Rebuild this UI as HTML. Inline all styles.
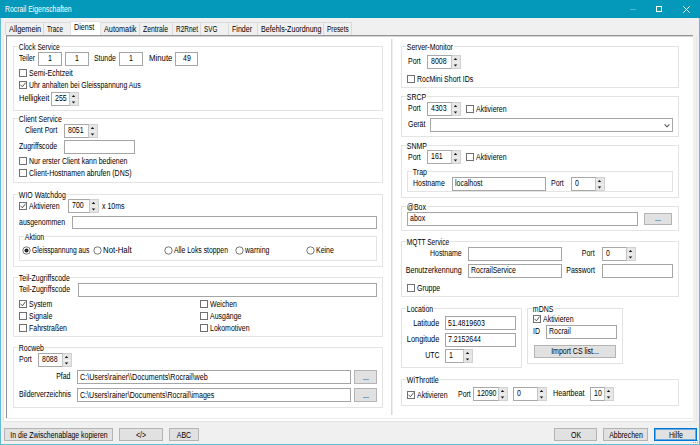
<!DOCTYPE html><html><head><meta charset="utf-8"><style>
html,body{margin:0;padding:0;}
body{width:700px;height:445px;position:relative;overflow:hidden;background:#f0f0f0;font-family:"Liberation Sans",sans-serif;font-size:8.5px;color:#000;}
.t{position:absolute;white-space:nowrap;line-height:9px;transform:scaleX(0.82);}
.gl{background:#fff;padding:0 1px;}
</style></head><body>
<div style="position:absolute;left:0px;top:0px;width:700px;height:18px;background:#0499bb;"></div>
<div style="position:absolute;left:0px;top:18px;width:1px;height:427px;background:#62bcd4;"></div>
<div style="position:absolute;left:699px;top:18px;width:1px;height:427px;background:#62bcd4;"></div>
<div style="position:absolute;left:0px;top:444px;width:700px;height:1px;background:#62bcd4;"></div>
<div class="t" style="top:5px;left:5px;transform-origin:0 0;color:#fff;transform:scaleX(0.806);">Rocrail Eigenschaften</div>
<div style="position:absolute;left:630px;top:9px;width:6px;height:1px;background:#4db8d2;"></div>
<div style="position:absolute;left:656px;top:6px;width:6px;height:6px;border:1px solid #fff;box-sizing:border-box;"></div>
<svg style="position:absolute;left:683px;top:6px" width="7" height="7"><path d="M0.3 0.3L6.7 6.7M6.7 0.3L0.3 6.7" stroke="#fff" stroke-width="1"/></svg>
<div style="position:absolute;left:3px;top:35px;width:1px;height:387px;background:#e6e6e6;"></div>
<div style="position:absolute;left:696px;top:35px;width:1px;height:387px;background:#e8e8e8;"></div>
<div style="position:absolute;left:4px;top:35px;width:689px;height:386px;background:#fff;"></div>
<div style="position:absolute;left:3px;top:421px;width:694px;height:1px;background:#e3e3e3;"></div>
<div style="position:absolute;left:6px;top:35px;width:687px;height:1px;background:#959595;"></div>
<div style="position:absolute;left:7px;top:36px;width:686px;height:1px;background:#d4d4d4;"></div>
<div style="position:absolute;left:6px;top:35px;width:1px;height:383px;background:#8c8c8c;"></div>
<div style="position:absolute;left:6px;top:418px;width:687px;height:1px;background:#ececec;"></div>
<div style="position:absolute;left:5px;top:22px;width:39px;height:13px;border:1px solid #dadada;border-bottom:none;background:#f0f0f0;box-sizing:border-box;"></div>
<div class="t" style="top:25px;left:9px;transform-origin:0 0;transform:scaleX(0.862);">Allgemein</div>
<div style="position:absolute;left:43px;top:22px;width:29px;height:13px;border:1px solid #dadada;border-bottom:none;background:#f0f0f0;box-sizing:border-box;"></div>
<div class="t" style="top:25px;left:47px;transform-origin:0 0;transform:scaleX(0.743);">Trace</div>
<div style="position:absolute;left:100px;top:22px;width:40px;height:13px;border:1px solid #dadada;border-bottom:none;background:#f0f0f0;box-sizing:border-box;"></div>
<div class="t" style="top:25px;left:104px;transform-origin:0 0;transform:scaleX(0.858);">Automatik</div>
<div style="position:absolute;left:139px;top:22px;width:34px;height:13px;border:1px solid #dadada;border-bottom:none;background:#f0f0f0;box-sizing:border-box;"></div>
<div class="t" style="top:25px;left:143px;transform-origin:0 0;transform:scaleX(0.806);">Zentrale</div>
<div style="position:absolute;left:172px;top:22px;width:29px;height:13px;border:1px solid #dadada;border-bottom:none;background:#f0f0f0;box-sizing:border-box;"></div>
<div class="t" style="top:25px;left:176px;transform-origin:0 0;transform:scaleX(0.764);">R2Rnet</div>
<div style="position:absolute;left:200px;top:22px;width:29px;height:13px;border:1px solid #dadada;border-bottom:none;background:#f0f0f0;box-sizing:border-box;"></div>
<div class="t" style="top:25px;left:204px;transform-origin:0 0;transform:scaleX(0.740);">SVG</div>
<div style="position:absolute;left:228px;top:22px;width:30px;height:13px;border:1px solid #dadada;border-bottom:none;background:#f0f0f0;box-sizing:border-box;"></div>
<div class="t" style="top:25px;left:232px;transform-origin:0 0;transform:scaleX(0.835);">Finder</div>
<div style="position:absolute;left:257px;top:22px;width:67px;height:13px;border:1px solid #dadada;border-bottom:none;background:#f0f0f0;box-sizing:border-box;"></div>
<div class="t" style="top:25px;left:261px;transform-origin:0 0;transform:scaleX(0.837);">Befehls-Zuordnung</div>
<div style="position:absolute;left:323px;top:22px;width:29px;height:13px;border:1px solid #dadada;border-bottom:none;background:#f0f0f0;box-sizing:border-box;"></div>
<div class="t" style="top:25px;left:327px;transform-origin:0 0;transform:scaleX(0.750);">Presets</div>
<div style="position:absolute;left:70px;top:21px;width:31px;height:14px;border:1px solid #e3e3e3;border-bottom:none;background:#fff;box-sizing:border-box;"></div>
<div class="t" style="top:23px;left:74px;transform-origin:0 0;transform:scaleX(0.839);">Dienst</div>
<div style="position:absolute;left:391px;top:39px;width:1px;height:376px;background:#d9d9d9;"></div>
<div style="position:absolute;left:392px;top:39px;width:1px;height:376px;background:#ededed;"></div>
<div style="position:absolute;left:13px;top:46px;width:370px;height:65px;border:1px solid #e3e3e3;box-sizing:border-box;"></div>
<div class="t gl" style="left:17.5px;top:43px;transform-origin:0 0;transform:scaleX(0.788);">Clock Service</div>
<div class="t" style="top:54px;left:19px;transform-origin:0 0;transform:scaleX(0.785);">Teiler</div>
<div style="position:absolute;left:38px;top:52px;width:24px;height:14px;border:1px solid #a5a5a5;background:#fff;box-sizing:border-box;"></div>
<div class="t" style="top:54px;left:-50.0px;width:200px;text-align:center;transform-origin:50% 0;">1</div>
<div style="position:absolute;left:65px;top:52px;width:24px;height:14px;border:1px solid #a5a5a5;background:#fff;box-sizing:border-box;"></div>
<div class="t" style="top:54px;left:-23.0px;width:200px;text-align:center;transform-origin:50% 0;">1</div>
<div class="t" style="top:54px;left:94px;transform-origin:0 0;transform:scaleX(0.808);">Stunde</div>
<div style="position:absolute;left:119px;top:52px;width:24px;height:14px;border:1px solid #a5a5a5;background:#fff;box-sizing:border-box;"></div>
<div class="t" style="top:54px;left:31.0px;width:200px;text-align:center;transform-origin:50% 0;">1</div>
<div class="t" style="top:54px;left:149px;transform-origin:0 0;transform:scaleX(0.920);">Minute</div>
<div style="position:absolute;left:175px;top:52px;width:23px;height:14px;border:1px solid #a5a5a5;background:#fff;box-sizing:border-box;"></div>
<div class="t" style="top:54px;left:86.5px;width:200px;text-align:center;transform-origin:50% 0;">49</div>
<div style="position:absolute;left:19px;top:69px;width:8px;height:8px;border:1px solid #707070;background:#fff;box-sizing:border-box;"></div>
<div class="t" style="top:69px;left:28.5px;transform-origin:0 0;transform:scaleX(0.835);">Semi-Echtzeit</div>
<div style="position:absolute;left:19px;top:81px;width:8px;height:8px;border:1px solid #707070;background:#fff;box-sizing:border-box;"></div>
<svg style="position:absolute;left:19px;top:81px" width="8" height="8"><path d="M1.4 3.7L3.4 5.8L6.6 1.6" stroke="#444" stroke-width="0.9" fill="none"/></svg>
<div class="t" style="top:81px;left:28.5px;transform-origin:0 0;transform:scaleX(0.809);">Uhr anhalten bei Gleisspannung Aus</div>
<div class="t" style="top:94px;left:19px;transform-origin:0 0;transform:scaleX(0.876);">Helligkeit</div>
<div style="position:absolute;left:51px;top:92px;width:19px;height:14px;border:1px solid #a8a8a8;border-right-color:#c4c4c4;background:#fff;box-sizing:border-box;"></div>
<div style="position:absolute;left:70px;top:92px;width:9px;height:14px;border:1px solid #d0d0d0;border-left:none;background:#e6e6e6;box-sizing:border-box;"></div>
<div style="position:absolute;left:70px;top:99px;width:8px;height:1px;background:#f0f0f0;"></div>
<svg style="position:absolute;left:71px;top:94px" width="5" height="4"><path d="M0.8 3L2.5 1.1L4.2 3Z" fill="#111"/></svg>
<svg style="position:absolute;left:71px;top:101px" width="5" height="4"><path d="M0.8 0.5L2.5 2.4L4.2 0.5Z" fill="#111"/></svg>
<div class="t" style="top:94px;left:55px;transform-origin:0 0;">255</div>
<div style="position:absolute;left:13px;top:118px;width:370px;height:65px;border:1px solid #e3e3e3;box-sizing:border-box;"></div>
<div class="t gl" style="left:17.5px;top:115px;transform-origin:0 0;">Client Service</div>
<div class="t" style="top:126px;left:25px;transform-origin:0 0;transform:scaleX(0.815);">Client Port</div>
<div style="position:absolute;left:64px;top:124px;width:25px;height:14px;border:1px solid #a8a8a8;border-right-color:#c4c4c4;background:#fff;box-sizing:border-box;"></div>
<div style="position:absolute;left:89px;top:124px;width:9px;height:14px;border:1px solid #d0d0d0;border-left:none;background:#e6e6e6;box-sizing:border-box;"></div>
<div style="position:absolute;left:89px;top:131px;width:8px;height:1px;background:#f0f0f0;"></div>
<svg style="position:absolute;left:90px;top:126px" width="5" height="4"><path d="M0.8 3L2.5 1.1L4.2 3Z" fill="#111"/></svg>
<svg style="position:absolute;left:90px;top:133px" width="5" height="4"><path d="M0.8 0.5L2.5 2.4L4.2 0.5Z" fill="#111"/></svg>
<div class="t" style="top:126px;left:68px;transform-origin:0 0;">8051</div>
<div class="t" style="top:142px;left:19px;transform-origin:0 0;">Zugriffscode</div>
<div style="position:absolute;left:64px;top:140px;width:71px;height:14px;border:1px solid #a5a5a5;background:#fff;box-sizing:border-box;"></div>
<div style="position:absolute;left:19px;top:157px;width:8px;height:8px;border:1px solid #707070;background:#fff;box-sizing:border-box;"></div>
<div class="t" style="top:157px;left:28.5px;transform-origin:0 0;">Nur erster Client kann bedienen</div>
<div style="position:absolute;left:19px;top:169px;width:8px;height:8px;border:1px solid #707070;background:#fff;box-sizing:border-box;"></div>
<div class="t" style="top:169px;left:28.5px;transform-origin:0 0;">Client-Hostnamen abrufen (DNS)</div>
<div style="position:absolute;left:13px;top:194px;width:370px;height:73px;border:1px solid #e3e3e3;box-sizing:border-box;"></div>
<div class="t gl" style="left:17.5px;top:191px;transform-origin:0 0;">WIO Watchdog</div>
<div style="position:absolute;left:19px;top:202px;width:8px;height:8px;border:1px solid #707070;background:#fff;box-sizing:border-box;"></div>
<svg style="position:absolute;left:19px;top:202px" width="8" height="8"><path d="M1.4 3.7L3.4 5.8L6.6 1.6" stroke="#444" stroke-width="0.9" fill="none"/></svg>
<div class="t" style="top:202px;left:28.5px;transform-origin:0 0;">Aktivieren</div>
<div style="position:absolute;left:68px;top:199px;width:22px;height:14px;border:1px solid #a8a8a8;border-right-color:#c4c4c4;background:#fff;box-sizing:border-box;"></div>
<div style="position:absolute;left:90px;top:199px;width:9px;height:14px;border:1px solid #d0d0d0;border-left:none;background:#e6e6e6;box-sizing:border-box;"></div>
<div style="position:absolute;left:90px;top:206px;width:8px;height:1px;background:#f0f0f0;"></div>
<svg style="position:absolute;left:91px;top:201px" width="5" height="4"><path d="M0.8 3L2.5 1.1L4.2 3Z" fill="#111"/></svg>
<svg style="position:absolute;left:91px;top:208px" width="5" height="4"><path d="M0.8 0.5L2.5 2.4L4.2 0.5Z" fill="#111"/></svg>
<div class="t" style="top:201px;left:72px;transform-origin:0 0;">700</div>
<div class="t" style="top:202px;left:102px;transform-origin:0 0;">x 10ms</div>
<div class="t" style="top:218px;left:19px;transform-origin:0 0;">ausgenommen</div>
<div style="position:absolute;left:72px;top:216px;width:305px;height:13px;border:1px solid #a5a5a5;background:#fff;box-sizing:border-box;"></div>
<div style="position:absolute;left:19px;top:236px;width:358px;height:25px;border:1px solid #e3e3e3;box-sizing:border-box;"></div>
<div class="t gl" style="left:23.5px;top:233px;transform-origin:0 0;">Aktion</div>
<svg style="position:absolute;left:22px;top:246px" width="9" height="9"><circle cx="4.5" cy="4.5" r="3.7" stroke="#666" stroke-width="0.9" fill="#fff"/><circle cx="4.5" cy="4.5" r="2" fill="#222"/></svg>
<div class="t" style="top:246px;left:32px;transform-origin:0 0;transform:scaleX(0.788);">Gleisspannung aus</div>
<svg style="position:absolute;left:93px;top:246px" width="9" height="9"><circle cx="4.5" cy="4.5" r="3.7" stroke="#666" stroke-width="0.9" fill="#fff"/></svg>
<div class="t" style="top:246px;left:103px;transform-origin:0 0;transform:scaleX(0.917);">Not-Halt</div>
<svg style="position:absolute;left:164px;top:246px" width="9" height="9"><circle cx="4.5" cy="4.5" r="3.7" stroke="#666" stroke-width="0.9" fill="#fff"/></svg>
<div class="t" style="top:246px;left:174px;transform-origin:0 0;transform:scaleX(0.804);">Alle Loks stoppen</div>
<svg style="position:absolute;left:235px;top:246px" width="9" height="9"><circle cx="4.5" cy="4.5" r="3.7" stroke="#666" stroke-width="0.9" fill="#fff"/></svg>
<div class="t" style="top:246px;left:245px;transform-origin:0 0;">warning</div>
<svg style="position:absolute;left:306px;top:246px" width="9" height="9"><circle cx="4.5" cy="4.5" r="3.7" stroke="#666" stroke-width="0.9" fill="#fff"/></svg>
<div class="t" style="top:246px;left:316px;transform-origin:0 0;">Keine</div>
<div style="position:absolute;left:13px;top:277px;width:370px;height:60px;border:1px solid #e3e3e3;box-sizing:border-box;"></div>
<div class="t gl" style="left:17.5px;top:274px;transform-origin:0 0;">Teil-Zugriffscode</div>
<div class="t" style="top:285px;left:19px;transform-origin:0 0;">Teil-Zugriffscode</div>
<div style="position:absolute;left:78px;top:283px;width:299px;height:14px;border:1px solid #a5a5a5;background:#fff;box-sizing:border-box;"></div>
<div style="position:absolute;left:19px;top:300px;width:8px;height:8px;border:1px solid #707070;background:#fff;box-sizing:border-box;"></div>
<svg style="position:absolute;left:19px;top:300px" width="8" height="8"><path d="M1.4 3.7L3.4 5.8L6.6 1.6" stroke="#444" stroke-width="0.9" fill="none"/></svg>
<div class="t" style="top:300px;left:28.5px;transform-origin:0 0;">System</div>
<div style="position:absolute;left:19px;top:312px;width:8px;height:8px;border:1px solid #707070;background:#fff;box-sizing:border-box;"></div>
<div class="t" style="top:312px;left:28.5px;transform-origin:0 0;">Signale</div>
<div style="position:absolute;left:19px;top:324px;width:8px;height:8px;border:1px solid #707070;background:#fff;box-sizing:border-box;"></div>
<div class="t" style="top:324px;left:28.5px;transform-origin:0 0;">Fahrstraßen</div>
<div style="position:absolute;left:200px;top:300px;width:8px;height:8px;border:1px solid #707070;background:#fff;box-sizing:border-box;"></div>
<div class="t" style="top:300px;left:209.5px;transform-origin:0 0;">Weichen</div>
<div style="position:absolute;left:200px;top:312px;width:8px;height:8px;border:1px solid #707070;background:#fff;box-sizing:border-box;"></div>
<div class="t" style="top:312px;left:209.5px;transform-origin:0 0;">Ausgänge</div>
<div style="position:absolute;left:200px;top:324px;width:8px;height:8px;border:1px solid #707070;background:#fff;box-sizing:border-box;"></div>
<div class="t" style="top:324px;left:209.5px;transform-origin:0 0;">Lokomotiven</div>
<div style="position:absolute;left:13px;top:347px;width:370px;height:61px;border:1px solid #e3e3e3;box-sizing:border-box;"></div>
<div class="t gl" style="left:17.5px;top:344px;transform-origin:0 0;">Rocweb</div>
<div class="t" style="top:355px;left:19px;transform-origin:0 0;">Port</div>
<div style="position:absolute;left:38px;top:353px;width:25px;height:14px;border:1px solid #a8a8a8;border-right-color:#c4c4c4;background:#fff;box-sizing:border-box;"></div>
<div style="position:absolute;left:63px;top:353px;width:9px;height:14px;border:1px solid #d0d0d0;border-left:none;background:#e6e6e6;box-sizing:border-box;"></div>
<div style="position:absolute;left:63px;top:360px;width:8px;height:1px;background:#f0f0f0;"></div>
<svg style="position:absolute;left:64px;top:355px" width="5" height="4"><path d="M0.8 3L2.5 1.1L4.2 3Z" fill="#111"/></svg>
<svg style="position:absolute;left:64px;top:362px" width="5" height="4"><path d="M0.8 0.5L2.5 2.4L4.2 0.5Z" fill="#111"/></svg>
<div class="t" style="top:355px;left:42px;transform-origin:0 0;">8088</div>
<div class="t" style="top:372px;right:630px;transform-origin:100% 0;">Pfad</div>
<div style="position:absolute;left:77px;top:370px;width:274px;height:14px;border:1px solid #a5a5a5;background:#fff;box-sizing:border-box;"></div>
<div class="t" style="top:373px;left:80px;transform-origin:0 0;transform:scaleX(0.842);">C:\Users\rainer\\Documents\Rocrail\web</div>
<div style="position:absolute;left:354px;top:370px;width:23px;height:14px;border:1px solid #b4b4b4;background:#e1e1e1;box-sizing:border-box;"></div>
<div class="t" style="top:373px;left:265.5px;width:200px;text-align:center;transform-origin:50% 0;">...</div>
<div class="t" style="top:390px;left:19px;transform-origin:0 0;transform:scaleX(0.810);">Bilderverzeichnis</div>
<div style="position:absolute;left:77px;top:388px;width:274px;height:14px;border:1px solid #a5a5a5;background:#fff;box-sizing:border-box;"></div>
<div class="t" style="top:391px;left:80px;transform-origin:0 0;transform:scaleX(0.834);">C:\Users\rainer\Documents\Rocrail\images</div>
<div style="position:absolute;left:354px;top:388px;width:23px;height:14px;border:1px solid #b4b4b4;background:#e1e1e1;box-sizing:border-box;"></div>
<div class="t" style="top:391px;left:265.5px;width:200px;text-align:center;transform-origin:50% 0;">...</div>
<div style="position:absolute;left:401px;top:46px;width:278px;height:42px;border:1px solid #e3e3e3;box-sizing:border-box;"></div>
<div class="t gl" style="left:405.5px;top:43px;transform-origin:0 0;">Server-Monitor</div>
<div class="t" style="top:57px;left:408px;transform-origin:0 0;">Port</div>
<div style="position:absolute;left:427px;top:55px;width:25px;height:14px;border:1px solid #a8a8a8;border-right-color:#c4c4c4;background:#fff;box-sizing:border-box;"></div>
<div style="position:absolute;left:452px;top:55px;width:9px;height:14px;border:1px solid #d0d0d0;border-left:none;background:#e6e6e6;box-sizing:border-box;"></div>
<div style="position:absolute;left:452px;top:62px;width:8px;height:1px;background:#f0f0f0;"></div>
<svg style="position:absolute;left:453px;top:57px" width="5" height="4"><path d="M0.8 3L2.5 1.1L4.2 3Z" fill="#111"/></svg>
<svg style="position:absolute;left:453px;top:64px" width="5" height="4"><path d="M0.8 0.5L2.5 2.4L4.2 0.5Z" fill="#111"/></svg>
<div class="t" style="top:57px;left:431px;transform-origin:0 0;">8008</div>
<div style="position:absolute;left:407px;top:75px;width:8px;height:8px;border:1px solid #707070;background:#fff;box-sizing:border-box;"></div>
<div class="t" style="top:75px;left:416.5px;transform-origin:0 0;">RocMini Short IDs</div>
<div style="position:absolute;left:401px;top:96px;width:278px;height:41px;border:1px solid #e3e3e3;box-sizing:border-box;"></div>
<div class="t gl" style="left:405.5px;top:93px;transform-origin:0 0;">SRCP</div>
<div class="t" style="top:104px;left:408px;transform-origin:0 0;">Port</div>
<div style="position:absolute;left:427px;top:102px;width:25px;height:14px;border:1px solid #a8a8a8;border-right-color:#c4c4c4;background:#fff;box-sizing:border-box;"></div>
<div style="position:absolute;left:452px;top:102px;width:9px;height:14px;border:1px solid #d0d0d0;border-left:none;background:#e6e6e6;box-sizing:border-box;"></div>
<div style="position:absolute;left:452px;top:109px;width:8px;height:1px;background:#f0f0f0;"></div>
<svg style="position:absolute;left:453px;top:104px" width="5" height="4"><path d="M0.8 3L2.5 1.1L4.2 3Z" fill="#111"/></svg>
<svg style="position:absolute;left:453px;top:111px" width="5" height="4"><path d="M0.8 0.5L2.5 2.4L4.2 0.5Z" fill="#111"/></svg>
<div class="t" style="top:104px;left:431px;transform-origin:0 0;">4303</div>
<div style="position:absolute;left:466px;top:105px;width:8px;height:8px;border:1px solid #707070;background:#fff;box-sizing:border-box;"></div>
<div class="t" style="top:105px;left:475.5px;transform-origin:0 0;">Aktivieren</div>
<div class="t" style="top:120px;left:408px;transform-origin:0 0;">Gerät</div>
<div style="position:absolute;left:430px;top:118px;width:243px;height:14px;border:1px solid #a5a5a5;background:#fff;box-sizing:border-box;"></div>
<svg style="position:absolute;left:664px;top:123px" width="7" height="5"><path d="M0.6 1.4L3 3.8L5.4 1.4" stroke="#555" stroke-width="1.1" fill="none"/></svg>
<div style="position:absolute;left:401px;top:145px;width:278px;height:53px;border:1px solid #e3e3e3;box-sizing:border-box;"></div>
<div class="t gl" style="left:405.5px;top:142px;transform-origin:0 0;">SNMP</div>
<div class="t" style="top:153px;left:408px;transform-origin:0 0;">Port</div>
<div style="position:absolute;left:427px;top:150px;width:25px;height:14px;border:1px solid #a8a8a8;border-right-color:#c4c4c4;background:#fff;box-sizing:border-box;"></div>
<div style="position:absolute;left:452px;top:150px;width:9px;height:14px;border:1px solid #d0d0d0;border-left:none;background:#e6e6e6;box-sizing:border-box;"></div>
<div style="position:absolute;left:452px;top:157px;width:8px;height:1px;background:#f0f0f0;"></div>
<svg style="position:absolute;left:453px;top:152px" width="5" height="4"><path d="M0.8 3L2.5 1.1L4.2 3Z" fill="#111"/></svg>
<svg style="position:absolute;left:453px;top:159px" width="5" height="4"><path d="M0.8 0.5L2.5 2.4L4.2 0.5Z" fill="#111"/></svg>
<div class="t" style="top:152px;left:431px;transform-origin:0 0;">161</div>
<div style="position:absolute;left:466px;top:153px;width:8px;height:8px;border:1px solid #707070;background:#fff;box-sizing:border-box;"></div>
<div class="t" style="top:153px;left:475.5px;transform-origin:0 0;">Aktivieren</div>
<div style="position:absolute;left:407px;top:171px;width:266px;height:21px;border:1px solid #e3e3e3;box-sizing:border-box;"></div>
<div class="t gl" style="left:411.5px;top:168px;transform-origin:0 0;">Trap</div>
<div class="t" style="top:179px;left:413px;transform-origin:0 0;">Hostname</div>
<div style="position:absolute;left:452px;top:177px;width:94px;height:14px;border:1px solid #a5a5a5;background:#fff;box-sizing:border-box;"></div>
<div class="t" style="top:179px;left:455px;transform-origin:0 0;">localhost</div>
<div class="t" style="top:179px;left:551px;transform-origin:0 0;">Port</div>
<div style="position:absolute;left:571px;top:177px;width:25px;height:14px;border:1px solid #a8a8a8;border-right-color:#c4c4c4;background:#fff;box-sizing:border-box;"></div>
<div style="position:absolute;left:596px;top:177px;width:9px;height:14px;border:1px solid #d0d0d0;border-left:none;background:#e6e6e6;box-sizing:border-box;"></div>
<div style="position:absolute;left:596px;top:184px;width:8px;height:1px;background:#f0f0f0;"></div>
<svg style="position:absolute;left:597px;top:179px" width="5" height="4"><path d="M0.8 3L2.5 1.1L4.2 3Z" fill="#111"/></svg>
<svg style="position:absolute;left:597px;top:186px" width="5" height="4"><path d="M0.8 0.5L2.5 2.4L4.2 0.5Z" fill="#111"/></svg>
<div class="t" style="top:179px;left:575px;transform-origin:0 0;">0</div>
<div style="position:absolute;left:401px;top:206px;width:278px;height:25px;border:1px solid #e3e3e3;box-sizing:border-box;"></div>
<div class="t gl" style="left:405.5px;top:203px;transform-origin:0 0;">@Box</div>
<div style="position:absolute;left:407px;top:212px;width:231px;height:14px;border:1px solid #a5a5a5;background:#fff;box-sizing:border-box;"></div>
<div class="t" style="top:214px;left:410px;transform-origin:0 0;">abox</div>
<div style="position:absolute;left:644px;top:213px;width:28px;height:12px;border:1px solid #b4b4b4;background:#e1e1e1;box-sizing:border-box;"></div>
<div class="t" style="top:214px;left:558.0px;width:200px;text-align:center;transform-origin:50% 0;">...</div>
<div style="position:absolute;left:401px;top:241px;width:278px;height:56px;border:1px solid #e3e3e3;box-sizing:border-box;"></div>
<div class="t gl" style="left:405.5px;top:238px;transform-origin:0 0;transform:scaleX(0.777);">MQTT Service</div>
<div class="t" style="top:249px;right:238px;transform-origin:100% 0;">Hostname</div>
<div style="position:absolute;left:468px;top:247px;width:94px;height:14px;border:1px solid #a5a5a5;background:#fff;box-sizing:border-box;"></div>
<div class="t" style="top:249px;right:105px;transform-origin:100% 0;">Port</div>
<div style="position:absolute;left:602px;top:247px;width:25px;height:14px;border:1px solid #a8a8a8;border-right-color:#c4c4c4;background:#fff;box-sizing:border-box;"></div>
<div style="position:absolute;left:627px;top:247px;width:9px;height:14px;border:1px solid #d0d0d0;border-left:none;background:#e6e6e6;box-sizing:border-box;"></div>
<div style="position:absolute;left:627px;top:254px;width:8px;height:1px;background:#f0f0f0;"></div>
<svg style="position:absolute;left:628px;top:249px" width="5" height="4"><path d="M0.8 3L2.5 1.1L4.2 3Z" fill="#111"/></svg>
<svg style="position:absolute;left:628px;top:256px" width="5" height="4"><path d="M0.8 0.5L2.5 2.4L4.2 0.5Z" fill="#111"/></svg>
<div class="t" style="top:249px;left:606px;transform-origin:0 0;">0</div>
<div class="t" style="top:266px;right:238px;transform-origin:100% 0;transform:scaleX(0.840);">Benutzerkennung</div>
<div style="position:absolute;left:468px;top:264px;width:94px;height:14px;border:1px solid #a5a5a5;background:#fff;box-sizing:border-box;"></div>
<div class="t" style="top:266px;left:471px;transform-origin:0 0;">RocrailService</div>
<div class="t" style="top:266px;right:105px;transform-origin:100% 0;">Passwort</div>
<div style="position:absolute;left:602px;top:264px;width:71px;height:14px;border:1px solid #a5a5a5;background:#fff;box-sizing:border-box;"></div>
<div style="position:absolute;left:407px;top:284px;width:8px;height:8px;border:1px solid #707070;background:#fff;box-sizing:border-box;"></div>
<div class="t" style="top:284px;left:416.5px;transform-origin:0 0;">Gruppe</div>
<div style="position:absolute;left:401px;top:308px;width:121px;height:60px;border:1px solid #e3e3e3;box-sizing:border-box;"></div>
<div class="t gl" style="left:405.5px;top:305px;transform-origin:0 0;">Location</div>
<div class="t" style="top:319px;right:261px;transform-origin:100% 0;transform:scaleX(0.862);">Latitude</div>
<div style="position:absolute;left:445px;top:316px;width:71px;height:14px;border:1px solid #a5a5a5;background:#fff;box-sizing:border-box;"></div>
<div class="t" style="top:319px;left:448px;transform-origin:0 0;">51.4819603</div>
<div class="t" style="top:335px;right:261px;transform-origin:100% 0;transform:scaleX(0.872);">Longitude</div>
<div style="position:absolute;left:445px;top:333px;width:71px;height:14px;border:1px solid #a5a5a5;background:#fff;box-sizing:border-box;"></div>
<div class="t" style="top:335px;left:448px;transform-origin:0 0;">7.2152644</div>
<div class="t" style="top:351px;right:261px;transform-origin:100% 0;">UTC</div>
<div style="position:absolute;left:445px;top:349px;width:19px;height:14px;border:1px solid #a8a8a8;border-right-color:#c4c4c4;background:#fff;box-sizing:border-box;"></div>
<div style="position:absolute;left:464px;top:349px;width:9px;height:14px;border:1px solid #d0d0d0;border-left:none;background:#e6e6e6;box-sizing:border-box;"></div>
<div style="position:absolute;left:464px;top:356px;width:8px;height:1px;background:#f0f0f0;"></div>
<svg style="position:absolute;left:465px;top:351px" width="5" height="4"><path d="M0.8 3L2.5 1.1L4.2 3Z" fill="#111"/></svg>
<svg style="position:absolute;left:465px;top:358px" width="5" height="4"><path d="M0.8 0.5L2.5 2.4L4.2 0.5Z" fill="#111"/></svg>
<div class="t" style="top:351px;left:449px;transform-origin:0 0;">1</div>
<div style="position:absolute;left:527px;top:308px;width:96px;height:56px;border:1px solid #e3e3e3;box-sizing:border-box;"></div>
<div class="t gl" style="left:531.5px;top:305px;transform-origin:0 0;">mDNS</div>
<div style="position:absolute;left:533px;top:315px;width:8px;height:8px;border:1px solid #707070;background:#fff;box-sizing:border-box;"></div>
<svg style="position:absolute;left:533px;top:315px" width="8" height="8"><path d="M1.4 3.7L3.4 5.8L6.6 1.6" stroke="#444" stroke-width="0.9" fill="none"/></svg>
<div class="t" style="top:315px;left:542.5px;transform-origin:0 0;">Aktivieren</div>
<div class="t" style="top:327px;left:533px;transform-origin:0 0;">ID</div>
<div style="position:absolute;left:546px;top:325px;width:71px;height:14px;border:1px solid #a5a5a5;background:#fff;box-sizing:border-box;"></div>
<div class="t" style="top:327px;left:549px;transform-origin:0 0;">Rocrail</div>
<div style="position:absolute;left:534px;top:345px;width:82px;height:13px;border:1px solid #b4b4b4;background:#e1e1e1;box-sizing:border-box;"></div>
<div class="t" style="top:347px;left:475.0px;width:200px;text-align:center;transform-origin:50% 0;transform:scaleX(0.821);">Import CS list...</div>
<div style="position:absolute;left:401px;top:379px;width:278px;height:27px;border:1px solid #e3e3e3;box-sizing:border-box;"></div>
<div class="t gl" style="left:405.5px;top:376px;transform-origin:0 0;">WiThrottle</div>
<div style="position:absolute;left:407px;top:391px;width:8px;height:8px;border:1px solid #707070;background:#fff;box-sizing:border-box;"></div>
<svg style="position:absolute;left:407px;top:391px" width="8" height="8"><path d="M1.4 3.7L3.4 5.8L6.6 1.6" stroke="#444" stroke-width="0.9" fill="none"/></svg>
<div class="t" style="top:391px;left:416.5px;transform-origin:0 0;">Aktivieren</div>
<div class="t" style="top:390px;left:458px;transform-origin:0 0;">Port</div>
<div style="position:absolute;left:473px;top:387px;width:26px;height:14px;border:1px solid #a8a8a8;border-right-color:#c4c4c4;background:#fff;box-sizing:border-box;"></div>
<div style="position:absolute;left:499px;top:387px;width:9px;height:14px;border:1px solid #d0d0d0;border-left:none;background:#e6e6e6;box-sizing:border-box;"></div>
<div style="position:absolute;left:499px;top:394px;width:8px;height:1px;background:#f0f0f0;"></div>
<svg style="position:absolute;left:500px;top:389px" width="5" height="4"><path d="M0.8 3L2.5 1.1L4.2 3Z" fill="#111"/></svg>
<svg style="position:absolute;left:500px;top:396px" width="5" height="4"><path d="M0.8 0.5L2.5 2.4L4.2 0.5Z" fill="#111"/></svg>
<div class="t" style="top:389px;left:477px;transform-origin:0 0;">12090</div>
<div style="position:absolute;left:513px;top:387px;width:25px;height:14px;border:1px solid #a8a8a8;border-right-color:#c4c4c4;background:#fff;box-sizing:border-box;"></div>
<div style="position:absolute;left:538px;top:387px;width:9px;height:14px;border:1px solid #d0d0d0;border-left:none;background:#e6e6e6;box-sizing:border-box;"></div>
<div style="position:absolute;left:538px;top:394px;width:8px;height:1px;background:#f0f0f0;"></div>
<svg style="position:absolute;left:539px;top:389px" width="5" height="4"><path d="M0.8 3L2.5 1.1L4.2 3Z" fill="#111"/></svg>
<svg style="position:absolute;left:539px;top:396px" width="5" height="4"><path d="M0.8 0.5L2.5 2.4L4.2 0.5Z" fill="#111"/></svg>
<div class="t" style="top:389px;left:517px;transform-origin:0 0;">0</div>
<div class="t" style="top:389px;left:553px;transform-origin:0 0;transform:scaleX(0.844);">Heartbeat</div>
<div style="position:absolute;left:590px;top:387px;width:15px;height:14px;border:1px solid #a8a8a8;border-right-color:#c4c4c4;background:#fff;box-sizing:border-box;"></div>
<div style="position:absolute;left:605px;top:387px;width:9px;height:14px;border:1px solid #d0d0d0;border-left:none;background:#e6e6e6;box-sizing:border-box;"></div>
<div style="position:absolute;left:605px;top:394px;width:8px;height:1px;background:#f0f0f0;"></div>
<svg style="position:absolute;left:606px;top:389px" width="5" height="4"><path d="M0.8 3L2.5 1.1L4.2 3Z" fill="#111"/></svg>
<svg style="position:absolute;left:606px;top:396px" width="5" height="4"><path d="M0.8 0.5L2.5 2.4L4.2 0.5Z" fill="#111"/></svg>
<div class="t" style="top:389px;left:594px;transform-origin:0 0;">10</div>
<div style="position:absolute;left:4px;top:428px;width:109px;height:13px;border:1px solid #b4b4b4;background:#e1e1e1;box-sizing:border-box;"></div>
<div class="t" style="top:431px;left:-41.5px;width:200px;text-align:center;transform-origin:50% 0;transform:scaleX(0.814);">In die Zwischenablage kopieren</div>
<div style="position:absolute;left:119px;top:428px;width:44px;height:13px;border:1px solid #b4b4b4;background:#e1e1e1;box-sizing:border-box;"></div>
<div class="t" style="top:431px;left:41.0px;width:200px;text-align:center;transform-origin:50% 0;">&lt;/&gt;</div>
<div style="position:absolute;left:169px;top:428px;width:30px;height:13px;border:1px solid #b4b4b4;background:#e1e1e1;box-sizing:border-box;"></div>
<div class="t" style="top:431px;left:84.0px;width:200px;text-align:center;transform-origin:50% 0;">ABC</div>
<div style="position:absolute;left:554px;top:428px;width:43px;height:13px;border:1px solid #b4b4b4;background:#e1e1e1;box-sizing:border-box;"></div>
<div class="t" style="top:431px;left:475.5px;width:200px;text-align:center;transform-origin:50% 0;">OK</div>
<div style="position:absolute;left:603px;top:428px;width:45px;height:13px;border:1px solid #b4b4b4;background:#e1e1e1;box-sizing:border-box;"></div>
<div class="t" style="top:431px;left:525.5px;width:200px;text-align:center;transform-origin:50% 0;">Abbrechen</div>
<div style="position:absolute;left:654px;top:428px;width:43px;height:13px;border:1px solid #0078d7;background:#e1e1e1;box-sizing:border-box;"></div>
<div style="position:absolute;left:655px;top:429px;width:41px;height:11px;border:1px solid #6aa8e0;box-sizing:border-box;"></div>
<div class="t" style="top:431px;left:575.5px;width:200px;text-align:center;transform-origin:50% 0;">Hilfe</div>
<div style="position:absolute;left:693px;top:442px;width:1px;height:1px;background:#a0a0a0;"></div>
<div style="position:absolute;left:695px;top:442px;width:1px;height:1px;background:#a0a0a0;"></div>
<div style="position:absolute;left:697px;top:442px;width:1px;height:1px;background:#a0a0a0;"></div>
<div style="position:absolute;left:697px;top:440px;width:1px;height:1px;background:#a0a0a0;"></div>
</body></html>
